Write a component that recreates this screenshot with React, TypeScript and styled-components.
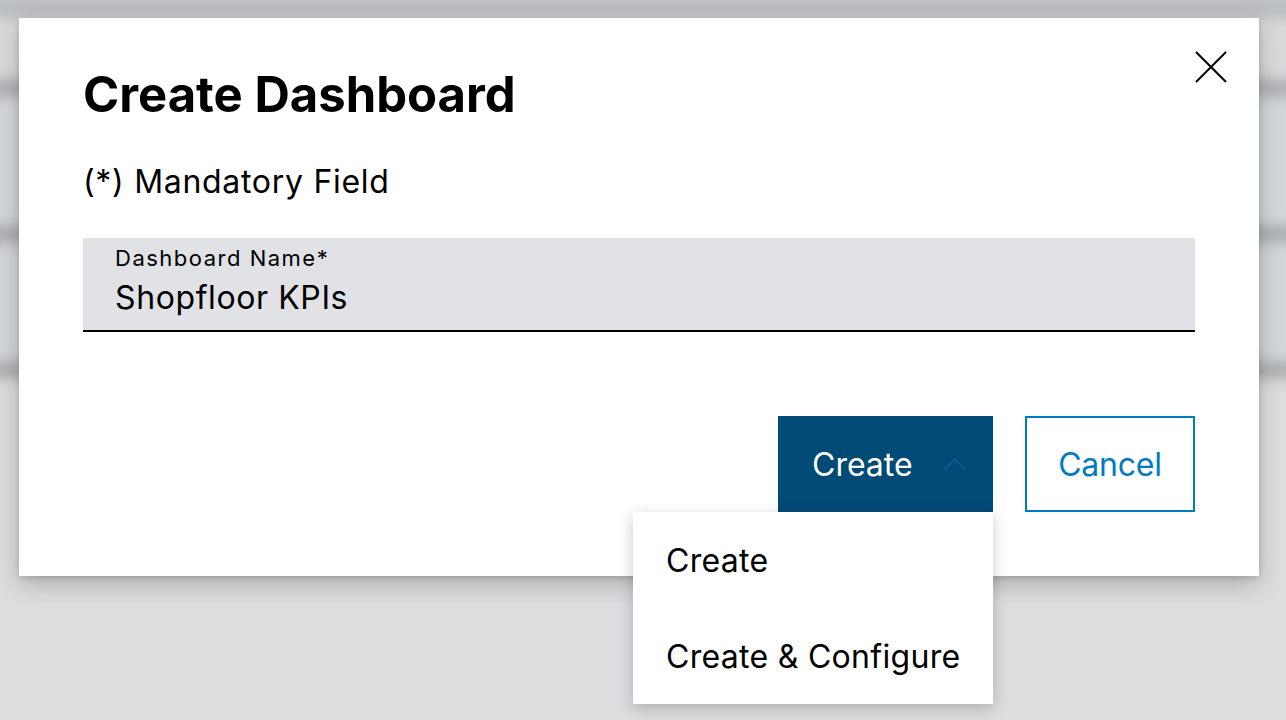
import React from "react";
import styled, { createGlobalStyle } from "styled-components";

const GlobalStyle = createGlobalStyle`
  html, body {
    margin: 0;
    padding: 0;
    background: #dcdddf;
  }
  body {
    font-family: Inter, "Noto Sans", Arial, sans-serif;
    color: #000;
    -webkit-font-smoothing: antialiased;
  }
  * { box-sizing: border-box; }
`;

const Page = styled.div`
  position: relative;
  width: 1286px;
  height: 720px;
  overflow: hidden;
  background: #dcdddf;
`;

/* Blurred application page lying under the modal overlay */
const Backdrop = styled.div`
  position: absolute;
  inset: -20px;
  display: flex;
  flex-direction: column;
  filter: blur(7px);
  background: #d9dbdd;
`;

const BackdropBand = styled.div<{ $h: number; $bg: string }>`
  height: ${(p) => p.$h}px;
  background: ${(p) => p.$bg};
  flex-shrink: 0;
`;

const Overlay = styled.div`
  position: relative;
  display: flex;
  flex-direction: column;
  align-items: flex-start;
  padding: 18px 0 0 19px;
`;

const Dialog = styled.div`
  position: relative;
  width: 1240px;
  height: 558px;
  background: #fff;
  box-shadow: 0 8px 22px rgba(0, 0, 0, 0.22), 0 2px 6px rgba(0, 0, 0, 0.12);
  padding: 0 64px;
  display: flex;
  flex-direction: column;
`;

const Header = styled.div`
  display: flex;
  justify-content: space-between;
  align-items: flex-start;
  padding-top: 47px;
`;

const Title = styled.h1`
  margin: 0;
  font-size: 49px;
  line-height: 60px;
  font-weight: 700;
`;

const CloseButton = styled.button`
  margin: -14px -32px 0 0;
  width: 32px;
  height: 32px;
  padding: 0;
  border: none;
  background: none;
  display: flex;
  align-items: center;
  justify-content: center;
  cursor: pointer;
`;

const Mandatory = styled.p`
  margin: 37px 0 0 0;
  font-size: 32px;
  line-height: 40px;
  letter-spacing: 0.7px;
  font-weight: 400;
`;

const Field = styled.div`
  margin-top: 36px;
  height: 94px;
  background: #e0e2e5;
  border-bottom: 2px solid #000;
  padding: 6px 32px 0;
  display: flex;
  flex-direction: column;
`;

const FieldLabel = styled.label`
  font-size: 22px;
  line-height: 28px;
  letter-spacing: 1.5px;
  color: #000;
`;

const FieldValue = styled.div`
  margin-top: 6px;
  font-size: 32px;
  line-height: 40px;
  letter-spacing: 0.6px;
  color: #000;
`;

const Actions = styled.div`
  margin-top: 84px;
  display: flex;
  justify-content: flex-end;
  gap: 32px;
`;

const SplitWrap = styled.div`
  position: relative;
`;

const PrimaryButton = styled.button`
  height: 96px;
  width: 215px;
  border: none;
  background: #004a76;
  color: #fff;
  font-family: inherit;
  font-size: 32px;
  display: flex;
  align-items: center;
  padding: 0 0 0 34px;
  gap: 30px;
  cursor: pointer;
`;

const SecondaryButton = styled.button`
  height: 96px;
  width: 170px;
  border: 2px solid #007bc0;
  background: #fff;
  color: #007bc0;
  font-family: inherit;
  font-size: 32px;
  letter-spacing: -0.2px;
  cursor: pointer;
`;

const Menu = styled.ul`
  position: absolute;
  top: 96px;
  right: 0;
  width: 360px;
  margin: 0;
  padding: 0;
  list-style: none;
  background: #fff;
  box-shadow: 0 4px 14px rgba(0, 0, 0, 0.22);
  z-index: 2;
`;

const MenuItem = styled.li`
  height: 96px;
  display: flex;
  align-items: center;
  padding: 0 0 0 33px;
  font-size: 32px;
  letter-spacing: 0.3px;
  white-space: nowrap;
  color: #000;
`;

const Chevron = () => (
  <svg width="24" height="16" viewBox="0 0 24 16" fill="none">
    <path d="M1.5 14 L12 3.5 L22.5 14" stroke="#0b5b90" strokeWidth="2" />
  </svg>
);

const CloseIcon = () => (
  <svg width="32" height="32" viewBox="0 0 32 32" fill="none">
    <path d="M1 1 L31 31 M31 1 L1 31" stroke="#000" strokeWidth="2" />
  </svg>
);

export default function App() {
  return (
    <>
      <GlobalStyle />
      <Page>
        <Backdrop>
          <BackdropBand $h={20} $bg="#c9ccd0" />
          <BackdropBand $h={18} $bg="#b7babc" />
          <BackdropBand $h={62} $bg="#d8dadc" />
          <BackdropBand $h={16} $bg="#a9acae" />
          <BackdropBand $h={130} $bg="#d4d7da" />
          <BackdropBand $h={16} $bg="#a7aaac" />
          <BackdropBand $h={120} $bg="#d3d6d9" />
          <BackdropBand $h={16} $bg="#a8abad" />
          <BackdropBand $h={400} $bg="#dcdddf" />
        </Backdrop>
        <Overlay>
          <Dialog role="dialog" aria-label="Create Dashboard">
            <Header>
              <Title>Create Dashboard</Title>
              <CloseButton aria-label="Close">
                <CloseIcon />
              </CloseButton>
            </Header>
            <Mandatory>(*) Mandatory Field</Mandatory>
            <Field>
              <FieldLabel>Dashboard Name*</FieldLabel>
              <FieldValue>Shopfloor KPIs</FieldValue>
            </Field>
            <Actions>
              <SplitWrap>
                <PrimaryButton>
                  Create
                  <Chevron />
                </PrimaryButton>
                <Menu>
                  <MenuItem>Create</MenuItem>
                  <MenuItem>Create &amp; Configure</MenuItem>
                </Menu>
              </SplitWrap>
              <SecondaryButton>Cancel</SecondaryButton>
            </Actions>
          </Dialog>
        </Overlay>
      </Page>
    </>
  );
}
